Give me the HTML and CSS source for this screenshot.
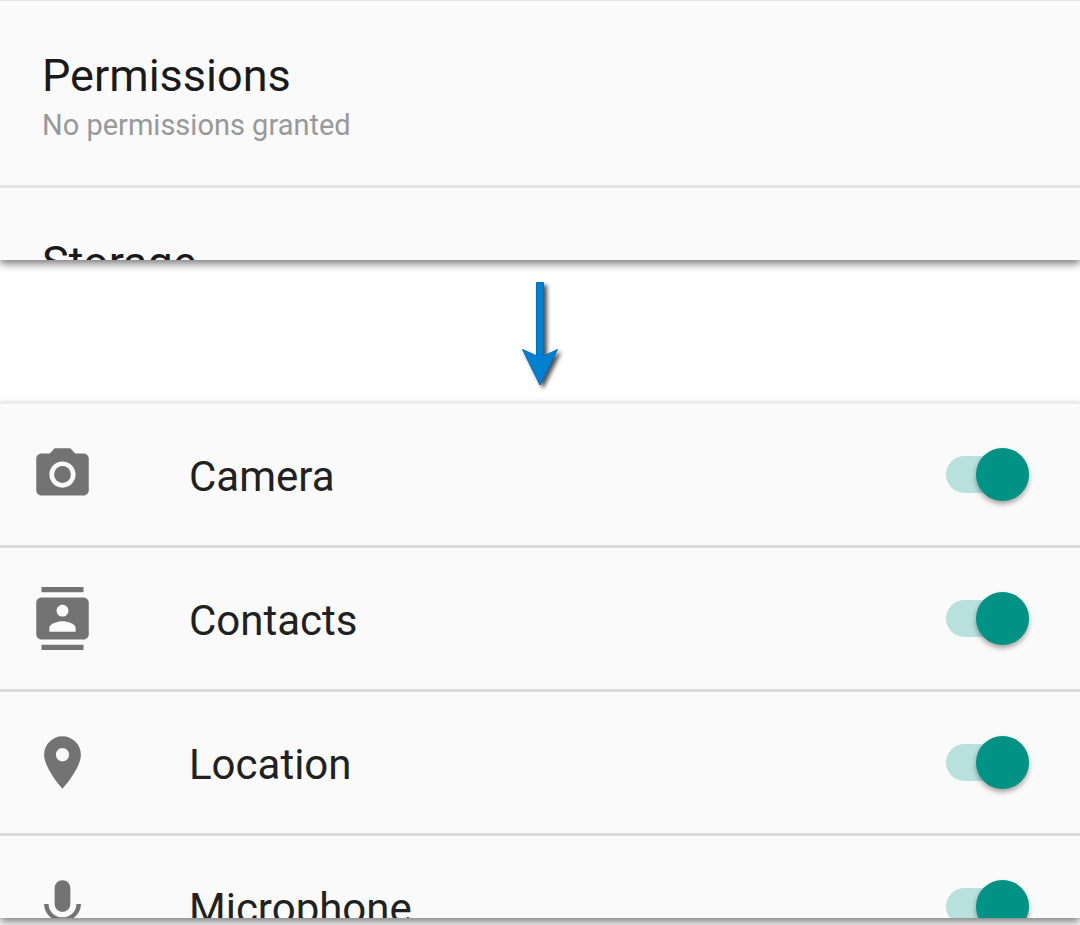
FILE: index.html
```html
<!DOCTYPE html>
<html lang="en">
<head>
<meta charset="utf-8">
<meta name="viewport" content="width=device-width, initial-scale=1">
<title>App permissions</title>
<link rel="stylesheet" href="styles.css">
</head>
<body>
<main class="page">
  <section class="panel panel-info">
    <div class="entry">
      <h2 class="entry-title">Permissions</h2>
      <p class="entry-note">No permissions granted</p>
    </div>
    <div class="entry entry-cut">
      <h2 class="entry-title">Storage</h2>
    </div>
  </section>

  <div class="step">
    <svg class="arrow" viewBox="0 0 48 116" aria-hidden="true">
      <path d="M20.500 4.500h7v73.500l14-6.500L24 107 6.500 71.500l14 6.500z" fill="#0080d0" stroke="#0070bc"/>
    </svg>
  </div>

  <section class="panel panel-list">
    <div class="row">
      <svg class="icon" viewBox="0 0 24 24" aria-hidden="true"><circle cx="12" cy="12" r="3.200"/><path d="M9 2 7.170 4H4c-1.100 0-2 .9-2 2v12c0 1.100.9 2 2 2h16c1.100 0 2-.9 2-2V6c0-1.100-.9-2-2-2h-3.170L15 2H9zm3 15c-2.760 0-5-2.240-5-5s2.240-5 5-5 5 2.240 5 5-2.240 5-5 5z"/></svg>
      <label class="row-label" for="camera">Camera</label>
      <input class="switch" type="checkbox" role="switch" id="camera" checked>
    </div>
    <div class="row">
      <svg class="icon" viewBox="0 0 24 24" aria-hidden="true"><path d="M20 0H4v2h16V0zM4 24h16v-2H4v2zM20 4H4c-1.100 0-2 .9-2 2v12c0 1.100.9 2 2 2h16c1.100 0 2-.9 2-2V6c0-1.100-.9-2-2-2zm-8 2.750c1.240 0 2.250 1.010 2.250 2.250s-1.010 2.250-2.250 2.250S9.750 10.240 9.750 9 10.760 6.750 12 6.750zM17 17H7v-1.500c0-1.670 3.330-2.500 5-2.500s5 .83 5 2.500V17z"/></svg>
      <label class="row-label" for="contacts">Contacts</label>
      <input class="switch" type="checkbox" role="switch" id="contacts" checked>
    </div>
    <div class="row">
      <svg class="icon" viewBox="0 0 24 24" aria-hidden="true"><path d="M12 2C8.130 2 5 5.130 5 9c0 5.250 7 13 7 13s7-7.750 7-13c0-3.870-3.130-7-7-7zm0 9.500c-1.380 0-2.500-1.120-2.500-2.500s1.120-2.500 2.500-2.500 2.500 1.120 2.500 2.500-1.120 2.500-2.500 2.500z"/></svg>
      <label class="row-label" for="location">Location</label>
      <input class="switch" type="checkbox" role="switch" id="location" checked>
    </div>
    <div class="row-cut">
      <div class="row">
        <svg class="icon" viewBox="0 0 24 24" aria-hidden="true"><path d="M12 14c1.660 0 2.990-1.340 2.990-3L15 5c0-1.660-1.340-3-3-3S9 3.340 9 5v6c0 1.660 1.340 3 3 3zm5.300-3c0 3-2.540 5.100-5.300 5.100S6.700 14 6.700 11H5c0 3.410 2.720 6.230 6 6.720V21h2v-3.280c3.280-.48 6-3.300 6-6.720h-1.700z"/></svg>
        <label class="row-label" for="microphone">Microphone</label>
        <input class="switch" type="checkbox" role="switch" id="microphone" checked>
      </div>
    </div>
  </section>
</main>
</body>
</html>
```
FILE: styles.css
```css
* {
  box-sizing: border-box;
}

body {
  margin: 0;
  background: #fff;
  color: #1a1a1a;
  font-family: Roboto, "Liberation Sans", sans-serif;
}

.page {
  overflow: hidden;
  padding-bottom: 7px;
}

.panel {
  background: #fafafa;
  box-shadow: 0 4px 8px rgba(0, 0, 0, 0.5);
}

.panel-info {
  border-top: 1px solid #e4e4e4;
}

.entry {
  padding: 48px 42px 42px;
  border-bottom: 3px solid #e4e4e4;
}

.entry-cut {
  max-height: 72px;
  padding-bottom: 0;
  border-bottom: 0;
  overflow: hidden;
}

.entry-title {
  margin: 0;
  font-size: 45px;
  font-weight: 400;
  line-height: 54px;
}

.entry-note {
  margin: 4px 0 0;
  color: #999;
  font-size: 29px;
  line-height: 36px;
}

.step {
  display: flex;
  justify-content: center;
  padding: 18px 0 8px;
}

.arrow {
  width: 48px;
  height: 116px;
  filter: drop-shadow(3px 3px 2px rgba(0, 0, 0, 0.7));
}

.panel-list {
  border-top: 2px solid #ececec;
}

.row {
  display: flex;
  align-items: center;
  height: 144px;
  padding: 0 51px 0 31px;
  border-bottom: 3px solid #dadada;
}

.row-cut {
  max-height: 82px;
  overflow: hidden;
}

.icon {
  flex: none;
  width: 63px;
  height: 63px;
  fill: #737373;
}

.row-label {
  flex: 1;
  padding: 4px 0 0 95px;
  color: #212121;
  font-size: 42px;
  line-height: 50px;
}

.switch {
  appearance: none;
  display: flex;
  flex: none;
  align-items: center;
  justify-content: flex-end;
  width: 83px;
  height: 37px;
  margin: 0;
  border-radius: 19px;
  background: #b8e0dc;
  cursor: pointer;
}

.switch::before {
  content: "";
  flex: none;
  width: 53px;
  height: 53px;
  border-radius: 50%;
  background: #009284;
  box-shadow: 0 3px 5px rgba(0, 0, 0, 0.35);
}

.switch:not(:checked) {
  justify-content: flex-start;
  background: #bdbdbd;
}

.switch:not(:checked)::before {
  background: #f1f1f1;
}
```
